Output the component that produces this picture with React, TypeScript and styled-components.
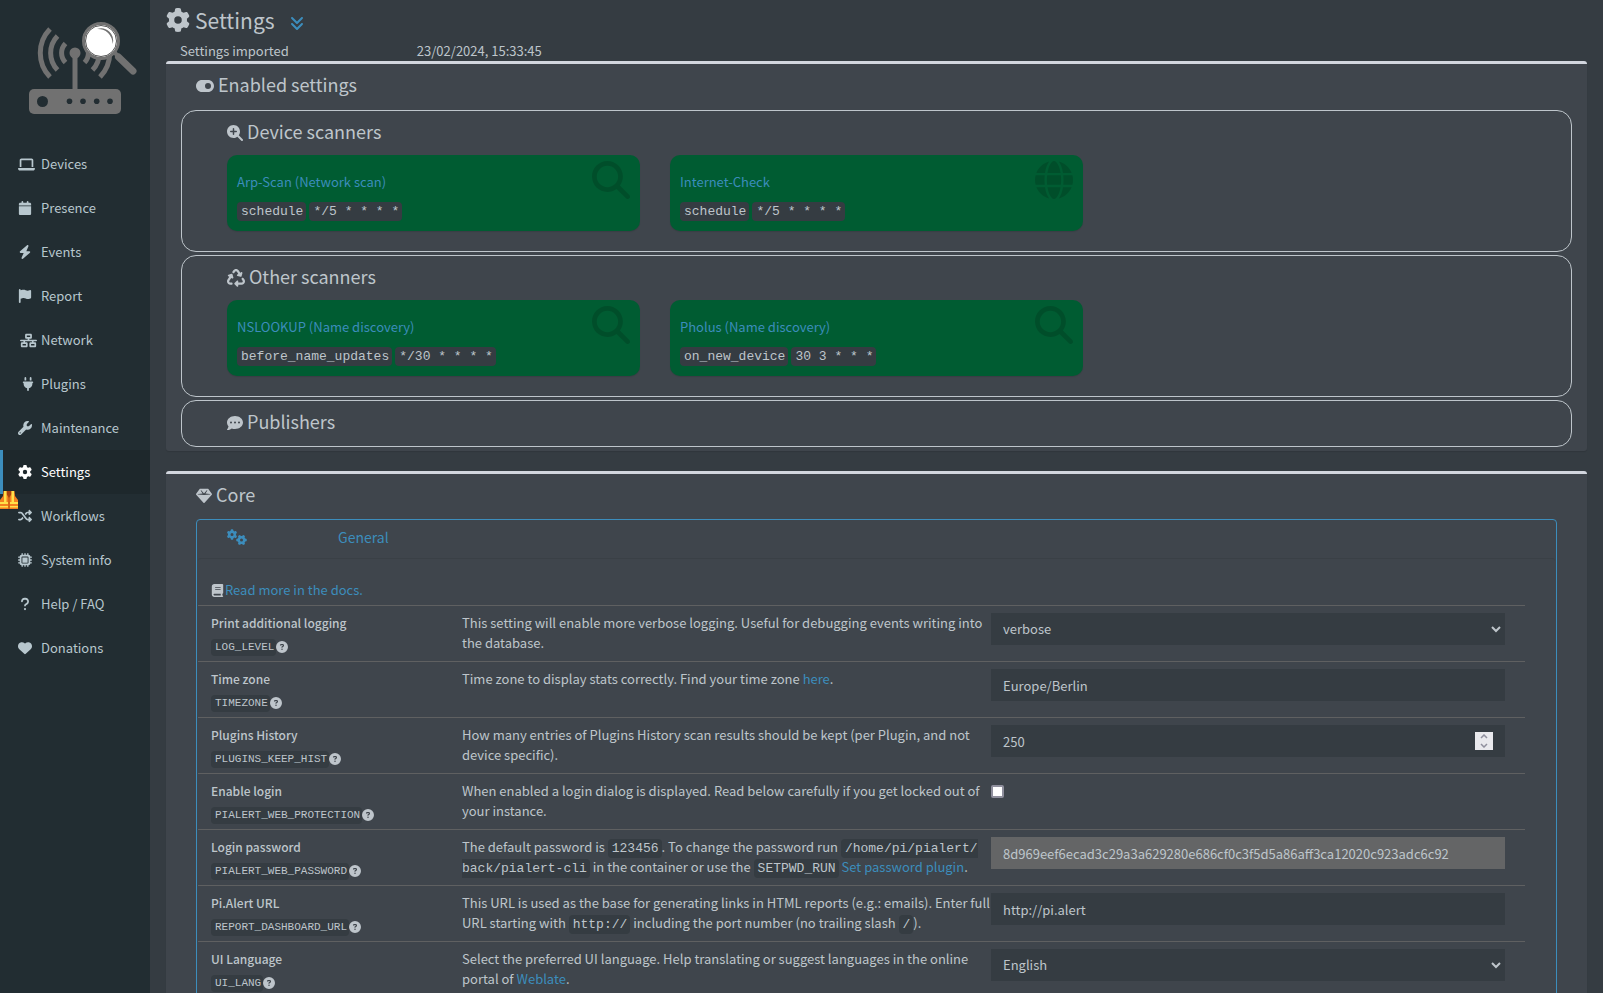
import React, { useState } from "react";
import styled, { createGlobalStyle, css } from "styled-components";
import {
  FaLaptop, FaCalendar, FaBolt, FaFlag, FaNetworkWired, FaPlug, FaWrench, FaGear, FaShuffle,
  FaMicrochip, FaQuestion, FaHeart, FaAnglesDown, FaToggleOn, FaMagnifyingGlassPlus, FaRecycle,
  FaCommentDots, FaGem, FaGears, FaBook, FaCircleQuestion, FaMagnifyingGlass, FaGlobe,
} from "react-icons/fa6";

const c = {
  page: "#353c42",
  box: "#3f454c",
  text: "#bec5cb",
  link: "#3c8dbc",
  sidebar: "#222d32",
  sidebarActive: "#1e282c",
  sidebarText: "#b8c7ce",
  line: "#5f6061",
  green: "#005c32",
};

const Global = createGlobalStyle`
  *, *::before, *::after { box-sizing: border-box; }
  body {
    margin: 0;
    background: ${c.page};
    color: ${c.text};
    font: 400 13px/20px "Source Sans Pro", "Noto Sans CJK SC", sans-serif;
  }
  a { color: ${c.link}; text-decoration: none; }
`;

const Shell = styled.div`
  display: flex;
  height: 100vh;
`;

const Sidebar = styled.aside`
  flex: 0 0 150px;
  background: ${c.sidebar};
`;

const LogoLink = styled.a`
  display: block;
  height: 142px;
  padding: 20px 0 0 27px;
  svg { display: block; }
`;

const Menu = styled.ul`
  list-style: none;
  margin: 0;
  padding: 0;
`;

const MenuItem = styled.li`
  position: relative;
`;

const MenuLink = styled.a<{ $active?: boolean }>`
  display: flex;
  align-items: center;
  height: 44px;
  padding-left: 15px;
  border-left: 3px solid ${(p) => (p.$active ? c.link : "transparent")};
  background: ${(p) => (p.$active ? c.sidebarActive : "transparent")};
  color: ${(p) => (p.$active ? "#ffffff" : c.sidebarText)};
`;

const MenuIcon = styled.span<{ $indent?: number }>`
  display: flex;
  width: 23px;
  padding-left: ${(p) => p.$indent || 0}px;
  font-size: 14px;
`;

const VestBadge = styled.span`
  position: absolute;
  left: 0;
  top: -3px;
  svg { display: block; }
`;

const Main = styled.main`
  flex: 1;
  min-width: 0;
  padding: 0 16px;
  overflow-y: auto;
  scrollbar-width: none;
`;

const TitleBar = styled.header`
  display: flex;
  align-items: center;
  height: 41px;
  padding-bottom: 2px;
`;

const Title = styled.h1`
  display: flex;
  align-items: center;
  gap: 5px;
  margin: 0;
  font-size: 21px;
  font-weight: 400;
  line-height: 36px;
`;

const ExpandButton = styled.button`
  display: flex;
  margin: 6px 0 0 14px;
  padding: 0;
  border: 0;
  background: none;
  color: ${c.link};
  font-size: 16px;
  cursor: pointer;
`;

const ImportInfo = styled.div`
  display: grid;
  grid-template-columns: 1fr 5fr;
`;

const ImportCell = styled.span`
  padding-left: 14px;
`;

const Box = styled.section`
  margin-bottom: 20px;
  padding: 0 15px 4px;
  border-top: 3px solid #d2d6de;
  border-radius: 3px;
  background: ${c.box};
  box-shadow: 0 1px 1px rgba(0, 0, 0, 0.1);
`;

const Heading = styled.h2<{ $inset: number; $after: number }>`
  display: flex;
  align-items: center;
  gap: 4px;
  margin: 0 0 ${(p) => p.$after}px;
  padding-left: ${(p) => p.$inset}px;
  font-size: 18px;
  font-weight: 400;
  line-height: 40px;
`;

const HeadingIcon = styled.span`
  display: flex;
  padding-top: 4px;
  font-size: 16px;
`;

const Group = styled.section`
  min-height: 47px;
  margin-bottom: 3px;
  border: 1px solid ${c.text};
  border-radius: 15px;
  &:last-child { margin-bottom: 0; }
`;

const CardGrid = styled.div`
  display: grid;
  grid-template-columns: repeat(3, minmax(0, 1fr));
  gap: 30px;
  padding: 0 45px 20px;
`;

const Card = styled.article`
  display: flex;
  justify-content: space-between;
  height: 76px;
  padding: 6px 10px 0;
  border-radius: 10px;
  background: ${c.green};
  box-shadow: 0 1px 1px rgba(0, 0, 0, 0.1);
`;

const CardBody = styled.div`
  padding-top: 11px;
`;

const CardCodes = styled.div`
  display: flex;
  gap: 3px;
  padding-top: 10px;
`;

const CardIcon = styled.span`
  font-size: 38px;
  color: rgba(0, 0, 0, 0.15);
  svg { display: block; }
`;

const codeFont = css`
  border-radius: 4px;
  background: ${c.page};
  color: ${c.text};
  font-family: "Liberation Mono", monospace;
`;

const Code = styled.code`
  ${codeFont}
  padding: 2px 3px 2px 4px;
  font-size: 13px;
  line-height: 15px;
  white-space: pre-wrap;
`;

const KeyCode = styled.code`
  ${codeFont}
  padding: 2px 2px 2px 4px;
  font-size: 11px;
  line-height: 13px;
`;

const Panel = styled.section`
  margin: 0 15px;
  padding: 0 31px 0 1px;
  border: 1px solid ${c.link};
  border-radius: 4px;
`;

const PanelTab = styled.button`
  display: flex;
  align-items: center;
  width: 100%;
  height: 38px;
  padding: 0 29px 4px;
  border: 0;
  background: none;
  color: ${c.link};
  font: inherit;
  font-size: 14px;
  text-align: left;
  cursor: pointer;
`;

const PanelTabIcon = styled.span`
  display: flex;
  width: 111px;
  font-size: 20px;
`;

const PanelBody = styled.div`
  margin-right: -30px;
  padding: 21px 30px 0 0;
  border-top: 1px solid #3a4046;
  border-radius: 3px;
`;

const DocsLine = styled.div`
  display: flex;
  align-items: center;
  gap: 1px;
  padding: 0 0 5px 13px;
`;

const Row = styled.div`
  display: grid;
  grid-template-columns: 249fr 544fr 534fr;
  min-height: 56px;
  padding-top: 7px;
  border-top: 1px solid ${c.line};
`;

const NameCell = styled.div`
  padding-left: 13px;
`;

const Name = styled.label`
  display: block;
  font-size: 12px;
  font-weight: 500;
`;

const KeyLine = styled.div`
  display: flex;
  align-items: center;
  height: 28px;
`;

const HelpButton = styled.button`
  display: flex;
  padding: 0;
  border: 0;
  background: none;
  color: ${c.text};
  font-size: 12px;
  cursor: pointer;
`;

const Description = styled.p`
  margin: 0 -4px 0 0;
  padding-left: 15px;
`;

const ControlCell = styled.div`
  position: relative;
  padding-right: 20px;
`;

const field = css`
  display: block;
  width: 100%;
  height: 32px;
  padding: 0 12px;
  border: 0;
  border-radius: 0;
  background: ${c.page};
  color: ${c.text};
  font: inherit;
  appearance: none;
  outline: none;
`;

const TextInput = styled.input`
  ${field}
  &:read-only { background: #646566; }
`;

const NumberInput = styled.input`
  ${field}
  appearance: textfield;
  &::-webkit-inner-spin-button { appearance: none; margin: 0; }
`;

const Select = styled.select`
  ${field}
`;

const SelectArrow = styled.svg`
  position: absolute;
  right: 24px;
  top: 13px;
  pointer-events: none;
`;

const Spinner = styled.div`
  position: absolute;
  right: 32px;
  top: 7px;
  display: grid;
  width: 18px;
  height: 18px;
  background: #e9e9ed;
`;

const SpinButton = styled.button`
  display: flex;
  align-items: center;
  justify-content: center;
  height: 9px;
  padding: 0;
  border: 0;
  background: none;
`;

const Checkbox = styled.input`
  display: block;
  width: 13px;
  height: 13px;
  margin: 4px 0 0;
  border: 2px solid #8f8f9d;
  border-radius: 2px;
  background: #ffffff;
  appearance: none;
  &:checked { background: ${c.link}; }
`;

function Logo() {
  return (
    <svg width="112" height="96" viewBox="27 20 112 96" role="img" aria-label="Pi.Alert">
      <g fill="none" stroke="#717171" strokeWidth="5">
        <path d="M65.5 43.5 A13.5 13.5 0 0 0 65.5 62.5 M57.5 36 A24.5 24.5 0 0 0 57.5 70 M50 29 A34.5 34.5 0 0 0 50 77" />
        <path d="M84.5 43.5 A13.5 13.5 0 0 1 84.5 62.5 M92.5 36 A24.5 24.5 0 0 1 92.5 70 M100 29 A34.5 34.5 0 0 1 100 77" />
      </g>
      <g fill="#717171">
        <circle cx="75" cy="53" r="5.5" />
        <rect x="72.5" y="55" width="5" height="36" />
        <rect x="29" y="89" width="92" height="25" rx="5" />
      </g>
      <g fill={c.sidebar}>
        <circle cx="42.5" cy="101.5" r="5.5" />
        <circle cx="69.5" cy="101.3" r="2.8" />
        <circle cx="83" cy="101.3" r="2.8" />
        <circle cx="96.7" cy="101.3" r="2.8" />
        <circle cx="110" cy="101.3" r="2.8" />
      </g>
      <path d="M112 50 L118 56" stroke="#717171" strokeWidth="4" />
      <path d="M118.5 57 L133 71" stroke="#717171" strokeWidth="7" strokeLinecap="round" />
      <circle cx="101" cy="41" r="17.5" fill="#ffffff" stroke="#717171" strokeWidth="3" />
      <circle cx="101" cy="41" r="15.5" fill="none" stroke="#555555" strokeWidth="1" />
      <path d="M97 29 A12 12 0 0 1 112.5 44 A14.5 14.5 0 0 0 97 29" fill="#717171" />
    </svg>
  );
}

function Vest() {
  return (
    <svg width="18" height="18" viewBox="0 0 18 18" aria-hidden="true">
      <path d="M3.5 0 H7 L9 4 L11 0 H14.5 L15 5 L18 9 V18 H0 V9 L3 5 Z" fill="#f4811f" />
      <path d="M6.5 0 H11.5 V3 L9 7 L6.5 3 Z" fill="#a8410f" />
      <path d="M9 6 V18" stroke="#b8520f" strokeWidth="1" />
      <path d="M4 0 H6.5 V11 H4 Z M11.5 0 H14 V11 H11.5 Z M0 11 H8 V13 H0 Z M10 11 H18 V13 H10 Z M0 15 H8 V16.5 H0 Z M10 15 H18 V16.5 H10 Z" fill="#ffe14a" />
    </svg>
  );
}

const menu = [
  { label: "Devices", icon: <FaLaptop size={17} /> },
  { label: "Presence", icon: <FaCalendar /> },
  { label: "Events", icon: <FaBolt /> },
  { label: "Report", icon: <FaFlag /> },
  { label: "Network", icon: <FaNetworkWired size={17} />, indent: 2 },
  { label: "Plugins", icon: <FaPlug />, indent: 3 },
  { label: "Maintenance", icon: <FaWrench /> },
  { label: "Settings", icon: <FaGear />, active: true },
  { label: "Workflows", icon: <FaShuffle />, vest: true },
  { label: "System info", icon: <FaMicrochip /> },
  { label: "Help / FAQ", icon: <FaQuestion /> },
  { label: "Donations", icon: <FaHeart /> },
];

const groups = [
  {
    title: "Device scanners",
    icon: <FaMagnifyingGlassPlus />,
    cards: [
      { name: "Arp-Scan (Network scan)", codes: ["schedule", "*/5 * * * *"], icon: <FaMagnifyingGlass /> },
      { name: "Internet-Check", codes: ["schedule", "*/5 * * * *"], icon: <FaGlobe /> },
    ],
  },
  {
    title: "Other scanners",
    icon: <FaRecycle size={18} />,
    cards: [
      { name: "NSLOOKUP (Name discovery)", codes: ["before_name_updates", "*/30 * * * *"], icon: <FaMagnifyingGlass /> },
      { name: "Pholus (Name discovery)", codes: ["on_new_device", "30 3 * * *"], icon: <FaMagnifyingGlass /> },
    ],
  },
  { title: "Publishers", icon: <FaCommentDots />, cards: [] },
];

function SelectField({ id, options }: { id: string; options: string[] }) {
  return (
    <>
      <Select id={id}>
        {options.map((o) => <option key={o}>{o}</option>)}
      </Select>
      <SelectArrow width="10" height="7" viewBox="0 0 10 7">
        <path d="M1 1 L5 5 L9 1" fill="none" stroke={c.text} strokeWidth="2" />
      </SelectArrow>
    </>
  );
}

function NumberField({ id, initial }: { id: string; initial: number }) {
  const [value, setValue] = useState(initial);
  return (
    <>
      <NumberInput id={id} type="number" value={value} onChange={(e) => setValue(Number(e.target.value))} />
      <Spinner>
        <SpinButton type="button" aria-label="Increase" onClick={() => setValue(value + 1)}>
          <svg width="8" height="5" viewBox="0 0 8 5"><path d="M1 4 L4 1 L7 4" fill="none" stroke="#8f8f9d" strokeWidth="1.5" /></svg>
        </SpinButton>
        <SpinButton type="button" aria-label="Decrease" onClick={() => setValue(value - 1)}>
          <svg width="8" height="5" viewBox="0 0 8 5"><path d="M1 1 L4 4 L7 1" fill="none" stroke="#8f8f9d" strokeWidth="1.5" /></svg>
        </SpinButton>
      </Spinner>
    </>
  );
}

const settings = [
  {
    key: "LOG_LEVEL",
    name: "Print additional logging",
    text: "This setting will enable more verbose logging. Useful for debugging events writing into the database.",
    control: <SelectField id="LOG_LEVEL" options={["verbose", "minimal", "debug"]} />,
  },
  {
    key: "TIMEZONE",
    name: "Time zone",
    text: <>Time zone to display stats correctly. Find your time zone <a href="#timezones">here</a>.</>,
    control: <TextInput id="TIMEZONE" defaultValue="Europe/Berlin" />,
  },
  {
    key: "PLUGINS_KEEP_HIST",
    name: "Plugins History",
    text: "How many entries of Plugins History scan results should be kept (per Plugin, and not device specific).",
    control: <NumberField id="PLUGINS_KEEP_HIST" initial={250} />,
  },
  {
    key: "PIALERT_WEB_PROTECTION",
    name: "Enable login",
    text: "When enabled a login dialog is displayed. Read below carefully if you get locked out of your instance.",
    control: <Checkbox id="PIALERT_WEB_PROTECTION" type="checkbox" />,
  },
  {
    key: "PIALERT_WEB_PASSWORD",
    name: "Login password",
    text: (
      <>
        The default password is <Code>123456</Code>. To change the password run{" "}
        <Code>/home/pi/pialert/<wbr />back/pialert-cli</Code> in the container or use the{" "}
        <Code>SETPWD_RUN</Code> <a href="#set-password">Set password plugin</a>.
      </>
    ),
    control: (
      <TextInput
        id="PIALERT_WEB_PASSWORD"
        readOnly
        value="8d969eef6ecad3c29a3a629280e686cf0c3f5d5a86aff3ca12020c923adc6c92"
      />
    ),
  },
  {
    key: "REPORT_DASHBOARD_URL",
    name: "Pi.Alert URL",
    text: (
      <>
        This URL is used as the base for generating links in HTML reports (e.g.: emails). Enter full URL
        starting with <Code>http://</Code> including the port number (no trailing slash <Code>/</Code>).
      </>
    ),
    control: <TextInput id="REPORT_DASHBOARD_URL" defaultValue="http://pi.alert" />,
  },
  {
    key: "UI_LANG",
    name: "UI Language",
    text: (
      <>
        Select the preferred UI language. Help translating or suggest languages in the online portal of{" "}
        <a href="#weblate">Weblate</a>.
      </>
    ),
    control: <SelectField id="UI_LANG" options={["English", "German", "Spanish"]} />,
  },
];

export default function App() {
  return (
    <>
      <Global />
      <Shell>
        <Sidebar>
          <LogoLink href="#home"><Logo /></LogoLink>
          <nav>
            <Menu>
              {menu.map((m) => (
                <MenuItem key={m.label}>
                  <MenuLink href="#" $active={m.active}>
                    <MenuIcon $indent={m.indent}>{m.icon}</MenuIcon>
                    {m.label}
                  </MenuLink>
                  {m.vest && <VestBadge><Vest /></VestBadge>}
                </MenuItem>
              ))}
            </Menu>
          </nav>
        </Sidebar>
        <Main>
          <TitleBar>
            <Title><FaGear size={24} />Settings</Title>
            <ExpandButton type="button" aria-label="Expand all"><FaAnglesDown /></ExpandButton>
          </TitleBar>
          <ImportInfo>
            <ImportCell>Settings imported</ImportCell>
            <ImportCell>23/02/2024, 15:33:45</ImportCell>
          </ImportInfo>

          <Box>
            <Heading $inset={15} $after={6}><HeadingIcon><FaToggleOn size={18} /></HeadingIcon>Enabled settings</Heading>
            {groups.map((g) => (
              <Group key={g.title}>
                <Heading $inset={45} $after={4}><HeadingIcon>{g.icon}</HeadingIcon>{g.title}</Heading>
                {g.cards.length > 0 && (
                  <CardGrid>
                    {g.cards.map((card) => (
                      <Card key={card.name}>
                        <CardBody>
                          <a href="#plugin">{card.name}</a>
                          <CardCodes>{card.codes.map((code) => <Code key={code}>{code}</Code>)}</CardCodes>
                        </CardBody>
                        <CardIcon>{card.icon}</CardIcon>
                      </Card>
                    ))}
                  </CardGrid>
                )}
              </Group>
            ))}
          </Box>

          <Box>
            <Heading $inset={15} $after={5}><HeadingIcon><FaGem /></HeadingIcon>Core</Heading>
            <Panel>
              <PanelTab type="button"><PanelTabIcon><FaGears /></PanelTabIcon>General</PanelTab>
              <PanelBody>
                <DocsLine><FaBook size={13} /><a href="#docs">Read more in the docs.</a></DocsLine>
                {settings.map((s) => (
                  <Row key={s.key}>
                    <NameCell>
                      <Name htmlFor={s.key}>{s.name}</Name>
                      <KeyLine>
                        <KeyCode>{s.key}</KeyCode>
                        <HelpButton type="button" aria-label={`Help for ${s.name}`}><FaCircleQuestion /></HelpButton>
                      </KeyLine>
                    </NameCell>
                    <Description>{s.text}</Description>
                    <ControlCell>{s.control}</ControlCell>
                  </Row>
                ))}
              </PanelBody>
            </Panel>
          </Box>
        </Main>
      </Shell>
    </>
  );
}
